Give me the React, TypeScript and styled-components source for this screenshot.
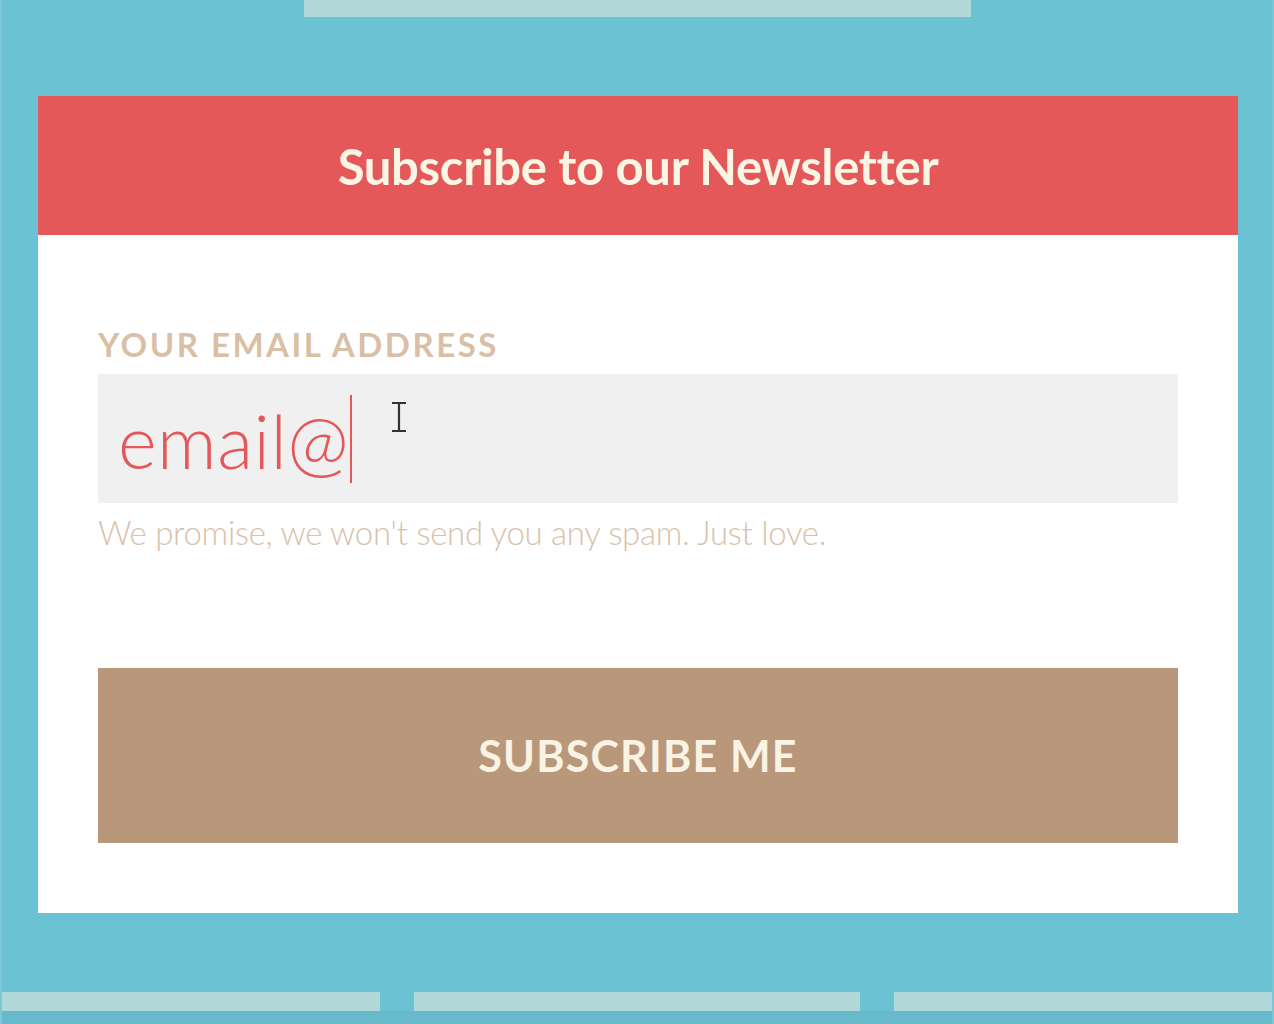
import React from "react";
import styled, { createGlobalStyle } from "styled-components";

const Global = createGlobalStyle`
  html, body { margin: 0; padding: 0; }
  body { background: #6bc2d3; font-family: Lato, "Open Sans", sans-serif; }
`;

const Page = styled.div`
  width: 1274px;
  height: 1024px;
  background: #6bc2d3;
  display: flex;
  flex-direction: column;
  overflow: hidden;
  box-sizing: border-box;
  border-left: 2px solid #7cc8d6;
  border-right: 2px solid #7cc8d6;
`;

const TopStripe = styled.div`
  margin-left: 302px;
  width: 667px;
  height: 17px;
  background: #b1d9da;
  flex-shrink: 0;
`;

const Card = styled.div`
  margin: 79px 0 0 36px;
  width: 1200px;
  background: #ffffff;
  display: flex;
  flex-direction: column;
  flex-shrink: 0;
`;

const Header = styled.div`
  height: 139px;
  background: #e5585a;
  display: flex;
  align-items: center;
  justify-content: center;
`;

const Title = styled.h1`
  margin: 0;
  font-family: Lato, sans-serif;
  font-weight: 700;
  font-size: 49px;
  color: #fbf5e4;
  letter-spacing: -0.3px;
`;

const Body = styled.div`
  padding: 88px 60px 70px;
  display: flex;
  flex-direction: column;
`;

const Label = styled.label`
  font-family: Lato, sans-serif;
  font-weight: 700;
  font-size: 33px;
  line-height: 36px;
  letter-spacing: 2.5px;
  color: #d9bfa5;
  margin-top: 3px;
  margin-bottom: -3px;
`;

const Field = styled.div`
  position: relative;
  margin-top: 15px;
  height: 129px;
  background: #f0f0f0;
  display: flex;
  align-items: center;
  padding-left: 20px;
`;

const Value = styled.span`
  font-family: Lato, sans-serif;
  font-weight: 300;
  font-size: 74px;
  color: #e5585a;
  letter-spacing: 0.5px;
  line-height: 1;
  margin-top: 4px;
`;

const Caret = styled.span`
  display: inline-block;
  width: 2px;
  height: 88px;
  background: #e5585a;
  margin-left: 1px;
`;

const Pointer = styled.svg`
  position: absolute;
  left: 293px;
  top: 27px;
`;

const Hint = styled.p`
  margin: 11px 0 0;
  font-family: Lato, sans-serif;
  font-weight: 300;
  font-size: 33px;
  line-height: 36px;
  letter-spacing: -0.3px;
  color: #d9c1ab;
`;

const Button = styled.button`
  margin-top: 118px;
  height: 175px;
  border: none;
  background: #b8977b;
  color: #f8f3e3;
  font-family: Lato, sans-serif;
  font-weight: 700;
  font-size: 43px;
  letter-spacing: 1.2px;
  cursor: pointer;
`;

const Spacer = styled.div`
  flex: 1;
`;

const BottomRow = styled.div`
  display: flex;
  gap: 34px;
  height: 19px;
  flex-shrink: 0;
`;

const BottomStripe = styled.div<{ $w: number }>`
  width: ${(p) => p.$w}px;
  background: #b1d9da;
  flex-shrink: 0;
`;

const BottomEdge = styled.div`
  height: 13px;
  background: #67bacb;
  flex-shrink: 0;
`;

export default function App() {
  return (
    <>
      <Global />
      <Page>
        <TopStripe />
        <Card>
          <Header>
            <Title>Subscribe to our Newsletter</Title>
          </Header>
          <Body>
            <Label>YOUR EMAIL ADDRESS</Label>
            <Field>
              <Value>email@</Value>
              <Caret />
              <Pointer width="16" height="32" viewBox="0 0 16 32">
                <path d="M1 2h14M1 30h14M8 2v28" stroke="#333" strokeWidth="2.2" fill="none" />
              </Pointer>
            </Field>
            <Hint>We promise, we won't send you any spam. Just love.</Hint>
            <Button>SUBSCRIBE ME</Button>
          </Body>
        </Card>
        <Spacer />
        <BottomRow>
          <BottomStripe $w={378} />
          <BottomStripe $w={446} />
          <BottomStripe $w={378} />
        </BottomRow>
        <BottomEdge />
      </Page>
    </>
  );
}
